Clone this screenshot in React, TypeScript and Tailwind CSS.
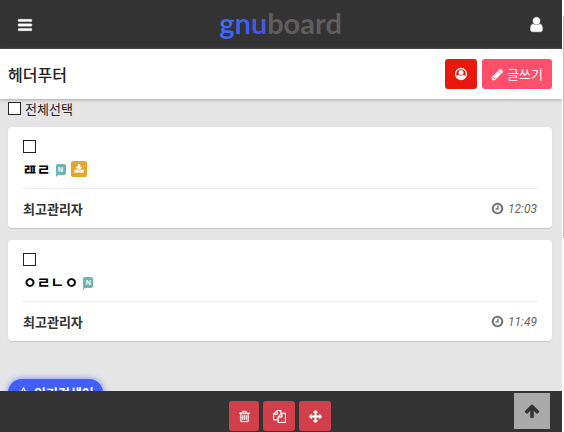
interface Post {
  id: number;
  title: string;
  author: string;
  time: string;
  isNew?: boolean;
  hasFile?: boolean;
}

const posts: Post[] = [
  { id: 1, title: 'ㄿㄹ', author: '최고관리자', time: '12:03', isNew: true, hasFile: true },
  { id: 2, title: 'ㅇㄹㄴㅇ', author: '최고관리자', time: '11:49', isNew: true },
];

const icons = {
  bars: 'M1664 1344v128q0 26-19 45t-45 19h-1408q-26 0-45-19t-19-45v-128q0-26 19-45t45-19h1408q26 0 45 19t19 45zm0-512v128q0 26-19 45t-45 19h-1408q-26 0-45-19t-19-45v-128q0-26 19-45t45-19h1408q26 0 45 19t19 45zm0-512v128q0 26-19 45t-45 19h-1408q-26 0-45-19t-19-45v-128q0-26 19-45t45-19h1408q26 0 45 19t19 45z',
  user: 'M1536 1399q0 109-62.5 187t-150.5 78h-854q-88 0-150.5-78t-62.5-187q0-85 8.5-160.5t31.5-152 58.5-131 94-89 134.5-34.5q131 128 313 128t313-128q76 0 134.5 34.5t94 89 58.5 131 31.5 152 8.5 160.5zm-256-887q0 159-112.5 271.5t-271.5 112.5-271.5-112.5-112.5-271.5 112.5-271.5 271.5-112.5 271.5 112.5 112.5 271.5z',
  pencil: 'M491 1536l91-91-235-235-91 91v107h128v128h107zm523-928q0-22-22-22-10 0-17 7l-542 542q-7 7-7 17 0 22 22 22 10 0 17-7l542-542q7-7 7-17zm-54-192l416 416-832 832h-416v-416zm683 96q0 53-37 90l-166 166-416-416 166-165q36-38 90-38 53 0 91 38l235 234q37 39 37 91z',
  download: 'M1344 1344q0-26-19-45t-45-19-45 19-19 45 19 45 45 19 45-19 19-45zm256 0q0-26-19-45t-45-19-45 19-19 45 19 45 45 19 45-19 19-45zm128-224v320q0 40-28 68t-68 28h-1472q-40 0-68-28t-28-68v-320q0-40 28-68t68-28h465l135 136q58 56 136 56t136-56l136-136h464q40 0 68 28t28 68zm-325-569q17 41-14 70l-448 448q-18 19-45 19t-45-19l-448-448q-31-29-14-70 17-39 59-39h256v-448q0-26 19-45t45-19h256q26 0 45 19t19 45v448h256q42 0 59 39z',
  clock: 'M1024 544v448q0 14-9 23t-23 9h-320q-14 0-23-9t-9-23v-64q0-14 9-23t23-9h224v-352q0-14 9-23t23-9h64q14 0 23 9t9 23zm416 352q0-148-73-273t-198-198-273-73-273 73-198 198-73 273 73 273 198 198 273 73 273-73 198-198 73-273zm224 0q0 209-103 385.5t-279.5 279.5-385.5 103-385.5-103-279.5-279.5-103-385.5 103-385.5 279.5-279.5 385.5-103 385.5 103 279.5 279.5 103 385.5z',
  star: 'M1201 1004l306-297-422-62-189-382-189 382-422 62 306 297-73 421 378-199 377 199zm527-357q0 22-26 48l-363 354 86 500q1 7 1 20 0 50-41 50-19 0-40-12l-449-236-449 236q-22 12-40 12-21 0-31.5-14.5t-10.5-35.5q0-6 2-20l86-500-364-354q-25-27-25-48 0-37 56-46l502-73 225-455q19-41 49-41t49 41l225 455 502 73q56 9 56 46z',
  trash: 'M704 736v576q0 14-9 23t-23 9h-64q-14 0-23-9t-9-23v-576q0-14 9-23t23-9h64q14 0 23 9t9 23zm256 0v576q0 14-9 23t-23 9h-64q-14 0-23-9t-9-23v-576q0-14 9-23t23-9h64q14 0 23 9t9 23zm256 0v576q0 14-9 23t-23 9h-64q-14 0-23-9t-9-23v-576q0-14 9-23t23-9h64q14 0 23 9t9 23zm128 724v-948h-896v948q0 22 7 40.5t14.5 27 10.5 8.5h832q3 0 10.5-8.5t14.5-27 7-40.5zm-672-1076h448l-48-117q-7-9-17-11h-317q-10 2-17 11zm928 32v64q0 14-9 23t-23 9h-96v948q0 83-47 143.5t-113 60.5h-832q-66 0-113-58.5t-47-141.5v-952h-96q-14 0-23-9t-9-23v-64q0-14 9-23t23-9h309l70-167q15-37 54-63t79-26h320q40 0 79 26t54 63l70 167h309q14 0 23 9t9 23z',
  copy: 'M1696 384q40 0 68 28t28 68v1216q0 40-28 68t-68 28h-960q-40 0-68-28t-28-68v-288h-544q-40 0-68-28t-28-68v-672q0-40 20-88t48-76l408-408q28-28 76-48t88-20h416q40 0 68 28t28 68v328q68-40 128-40h416zm-544 213l-299 299h299v-299zm-640-384l-299 299h299v-299zm196 647l316-316v-416h-384v416q0 40-28 68t-68 28h-416v640h512v-256q0-40 20-88t48-76zm956 804v-1152h-384v416q0 40-28 68t-68 28h-416v640h896z',
  move: 'M1792 896q0 26-19 45l-256 256q-19 19-45 19t-45-19-19-45v-128h-384v384h128q26 0 45 19t19 45-19 45l-256 256q-19 19-45 19t-45-19l-256-256q-19-19-19-45t19-45 45-19h128v-384h-384v128q0 26-19 45t-45 19-45-19l-256-256q-19-19-19-45t19-45l256-256q19-19 45-19t45 19 19 45v128h384v-384h-128q-26 0-45-19t-19-45 19-45l256-256q19-19 45-19t45 19l256 256q19 19 19 45t-19 45-45 19h-128v384h384v-128q0-26 19-45t45-19 45 19l256 256q19 19 19 45z',
  up: 'M1675 971q0 51-37 90l-75 75q-38 38-91 38-54 0-90-38l-294-293v704q0 52-37.5 84.5t-90.5 32.5h-128q-53 0-90.5-32.5t-37.5-84.5v-704l-294 293q-36 38-90 38t-90-38l-75-75q-38-38-38-90 0-53 38-91l651-651q35-37 90-37 54 0 91 37l651 651q37 39 37 91z',
};

function Icon({ name, className }: { name: keyof typeof icons; className: string }) {
  return (
    <svg viewBox="0 0 1792 1792" fill="currentColor" stroke="currentColor" strokeWidth="40" aria-hidden="true" className={className}>
      <path d={icons[name]} />
    </svg>
  );
}

function AdminIcon() {
  return (
    <svg viewBox="0 0 14 14" aria-hidden="true" className="h-3.5 w-3.5">
      <circle cx="7" cy="7" r="5.5" fill="none" stroke="currentColor" strokeWidth="1.3" />
      <circle cx="7" cy="5.4" r="2.5" fill="currentColor" />
      <path d="M2.400 10.400C2.800 8.600 3.800 7.900 4.600 7.700c1.400 1.200 3.400 1.200 4.800 0 .8.2 1.800.9 2.200 2.700A5.700 5.700 0 0 1 7 12.700a5.700 5.700 0 0 1-4.600-2.300z" fill="currentColor" />
    </svg>
  );
}

const checkboxClass = 'block h-[13px] w-[13px] shrink-0 appearance-none border border-[#222] bg-white checked:bg-[#222]';

function NewBadge() {
  return (
    <span className="relative flex h-[11px] w-[10px] items-center justify-center rounded-xs bg-[#6db5b1] font-['Liberation_Sans'] text-[7px] leading-none font-bold text-white">
      N
      <svg viewBox="0 0 3 3" aria-hidden="true" className="absolute top-[10px] left-0 h-[3px] w-[3px]">
        <path d="M0 0h3L0 3z" fill="#6db5b1" />
      </svg>
    </span>
  );
}

function PostCard({ post }: { post: Post }) {
  return (
    <li className="rounded-sm bg-white px-[15px] shadow-[0_1px_1px_#c4c8ca]">
      <div className="pt-[13px] pb-[9px]">
        <input type="checkbox" aria-label={post.title} className={checkboxClass} />
        <div className="mt-1.5 flex h-5 items-center gap-[5px]">
          <a href="#" className="text-[15px] leading-5 font-bold text-black">{post.title}</a>
          {post.isNew && <NewBadge />}
          {post.hasFile && (
            <span className="flex h-4 w-4 items-center justify-center rounded-xs bg-[#e8a62c] text-white">
              <Icon name="download" className="h-2.5 w-2.5" />
            </span>
          )}
        </div>
      </div>
      <div className="flex h-10 items-center justify-between border-t border-[#ececec]">
        <span className="text-[13px] font-bold text-[#333]">{post.author}</span>
        <span className="flex items-center gap-1 text-[#666]">
          <Icon name="clock" className="h-[13px] w-[13px]" />
          <time className="font-['Roboto',sans-serif] text-xs italic">{post.time}</time>
        </span>
      </div>
    </li>
  );
}

const toolClass = 'flex h-[30px] items-center justify-center rounded-[3px] bg-[#d13f4a] text-white';

export default function App() {
  return (
    <div className="flex h-screen overflow-hidden bg-white font-['Noto_Sans_CJK_KR',sans-serif]">
      <div className="relative min-w-0 flex-1 overflow-hidden bg-[#e5e5e5]">
        {/* Top bar */}
        <header className="flex h-[49px] items-center justify-between bg-[#333] px-[17px] text-white">
          <button type="button" aria-label="메뉴">
            <Icon name="bars" className="h-4 w-4" />
          </button>
          <a href="#" className="pb-1 font-['Lato',sans-serif] text-[29px] leading-[45px] font-bold">
            <span className="bg-gradient-to-r from-[#3f6cf8] via-[#3d5cf5] to-[#4a55e0] bg-clip-text text-transparent">gnu</span>
            <span className="text-[#5e5e5e]">board</span>
          </a>
          <button type="button" aria-label="회원">
            <Icon name="user" className="h-[17px] w-[17px]" />
          </button>
        </header>

        {/* Board title */}
        <div className="relative flex h-[50px] items-center justify-between bg-white pr-2.5 pl-2 shadow-[0_1px_3px_#aaa]">
          <h1 className="text-base font-medium text-[#222]">헤더푸터</h1>
          <div className="flex gap-[5px]">
            <a href="#" aria-label="관리자" className="flex h-[30px] w-8 items-center justify-center rounded-[3px] bg-[#e8180c] text-white">
              <AdminIcon />
            </a>
            <a href="#" className="flex h-[30px] w-[70px] items-center justify-center gap-[3px] rounded-[3px] bg-[#ff4f6b] text-[13px] text-white">
              <Icon name="pencil" className="h-[13px] w-[13px]" />
              글쓰기
            </a>
          </div>
        </div>

        {/* Post list */}
        <main className="pr-2.5 pl-2">
          <label className="flex h-7 items-start gap-1 pt-[3px] text-[13px] leading-[14px] text-[#222]">
            <input type="checkbox" className={checkboxClass} />
            전체선택
          </label>
          <ul className="flex flex-col gap-3">
            {posts.map((post) => (
              <PostCard key={post.id} post={post} />
            ))}
          </ul>
          <h2 className="mt-[38px] inline-flex h-7 items-center gap-1 rounded-full bg-[#415eff] px-[9px] text-[13px] font-bold text-white shadow-[0_0_6px_#6e85ff]">
            <Icon name="star" className="h-[13px] w-[13px]" />
            인기검색어
          </h2>
        </main>

        {/* Admin tools */}
        <div className="absolute inset-x-0 bottom-0 flex h-[41px] items-end justify-center gap-1 bg-[#333] pr-0.5 pb-px">
          <button type="button" aria-label="선택삭제" className={`${toolClass} w-[30px]`}>
            <Icon name="trash" className="h-[13px] w-[13px]" />
          </button>
          <button type="button" aria-label="선택복사" className={`${toolClass} w-8`}>
            <Icon name="copy" className="h-[13px] w-[13px]" />
          </button>
          <button type="button" aria-label="선택이동" className={`${toolClass} w-8`}>
            <Icon name="move" className="h-[13px] w-[13px]" />
          </button>
        </div>
        <button type="button" aria-label="상단으로" className="absolute right-3 bottom-[3px] flex h-9 w-9 items-center justify-center bg-[#aaa] text-[#333]">
          <Icon name="up" className="h-4 w-4" />
        </button>
      </div>

      {/* Scroll track */}
      <div className="w-0.5 pt-4 pl-px">
        <div className="h-[222px] bg-[#c4c4c4]"></div>
      </div>
    </div>
  );
}
